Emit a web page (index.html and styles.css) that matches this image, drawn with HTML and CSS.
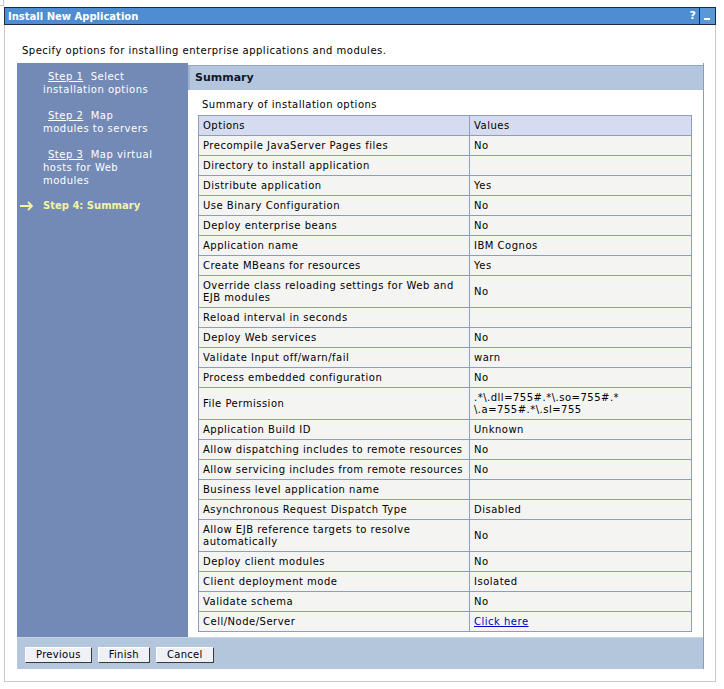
FILE: index.html
```html
<!DOCTYPE html>
<html>
<head>
<meta charset="utf-8">
<title>Install New Application</title>
<link rel="stylesheet" href="styles.css">
</head>
<body>
<div class="corner"></div>
<div class="page">
  <div class="titlebar">
    <span class="title">Install New Application</span>
    <span class="tb-icons">
      <span class="help">?</span>
      <span class="minimize"><span class="dash"></span></span>
    </span>
  </div>
  <div class="panel">
    <p class="intro">Specify options for installing enterprise applications and modules.</p>
    <div class="wizard">
      <nav class="steps">
        <div class="step"><span class="marker"></span><span class="step-text"><a class="step-link" href="#">Step 1</a>&nbsp; Select installation options</span></div>
        <div class="step"><span class="marker"></span><span class="step-text"><a class="step-link" href="#">Step 2</a>&nbsp; Map modules to servers</span></div>
        <div class="step"><span class="marker"></span><span class="step-text"><a class="step-link" href="#">Step 3</a>&nbsp; Map virtual hosts for Web modules</span></div>
        <div class="step current">
          <span class="marker"><svg class="arrow" width="15" height="10" viewBox="0 0 15 10"><path d="M1 5 H13 M9 1 L13 5 L9 9" fill="none" stroke="#f4f4a2" stroke-width="1.8"/></svg></span>
          <span class="step-text">Step 4: Summary</span>
        </div>
      </nav>
      <main class="content">
        <div class="content-head">Summary</div>
        <div class="content-body">
          <div class="caption">Summary of installation options</div>
          <table class="summary">
            <colgroup><col class="col-opt"><col class="col-val"></colgroup>
            <thead>
              <tr><th>Options</th><th>Values</th></tr>
            </thead>
            <tbody>
              <tr><td>Precompile JavaServer Pages files</td><td>No</td></tr>
              <tr><td>Directory to install application</td><td></td></tr>
              <tr><td>Distribute application</td><td>Yes</td></tr>
              <tr><td>Use Binary Configuration</td><td>No</td></tr>
              <tr><td>Deploy enterprise beans</td><td>No</td></tr>
              <tr><td>Application name</td><td>IBM Cognos</td></tr>
              <tr><td>Create MBeans for resources</td><td>Yes</td></tr>
              <tr><td>Override class reloading settings for Web and EJB modules</td><td>No</td></tr>
              <tr><td>Reload interval in seconds</td><td></td></tr>
              <tr><td>Deploy Web services</td><td>No</td></tr>
              <tr><td>Validate Input off/warn/fail</td><td>warn</td></tr>
              <tr><td>Process embedded configuration</td><td>No</td></tr>
              <tr><td>File Permission</td><td>.*\.dll=755#.*\.so=755#.*<br>\.a=755#.*\.sl=755</td></tr>
              <tr><td>Application Build ID</td><td>Unknown</td></tr>
              <tr><td>Allow dispatching includes to remote resources</td><td>No</td></tr>
              <tr><td>Allow servicing includes from remote resources</td><td>No</td></tr>
              <tr><td>Business level application name</td><td></td></tr>
              <tr><td>Asynchronous Request Dispatch Type</td><td>Disabled</td></tr>
              <tr><td>Allow EJB reference targets to resolve automatically</td><td>No</td></tr>
              <tr><td>Deploy client modules</td><td>No</td></tr>
              <tr><td>Client deployment mode</td><td>Isolated</td></tr>
              <tr><td>Validate schema</td><td>No</td></tr>
              <tr><td>Cell/Node/Server</td><td><a class="link" href="#">Click here</a></td></tr>
            </tbody>
          </table>
        </div>
      </main>
      <div class="buttons">
        <button class="btn" type="button">Previous</button>
        <button class="btn" type="button">Finish</button>
        <button class="btn" type="button">Cancel</button>
      </div>
    </div>
  </div>
</div>
</body>
</html>
```
FILE: styles.css
```css
* { box-sizing: border-box; }

html, body {
  margin: 0;
  padding: 0;
  background: #ffffff;
}

body {
  font-family: "DejaVu Sans", Verdana, sans-serif;
  font-size: 10px;
  letter-spacing: 0.5px;
  color: #000000;
  position: relative;
}

.corner {
  position: absolute;
  left: 0;
  top: 0;
  width: 4px;
  height: 6px;
  border-right: 1px solid #c8c8c8;
  border-bottom: 1px solid #c8c8c8;
}

.page {
  padding: 7px 0 0 4px;
  width: 716px;
}

.titlebar {
  height: 18px;
  background: #4e8dd1;
  border: 1px solid #1c2c48;
  display: flex;
  align-items: center;
  justify-content: space-between;
  padding-left: 3px;
  letter-spacing: 0;
}

.title {
  color: #ffffff;
  font-weight: bold;
  font-size: 10px;
}

.tb-icons {
  display: flex;
  align-items: stretch;
  height: 100%;
}

.help {
  color: #ffffff;
  font-weight: bold;
  font-size: 11px;
  line-height: 16px;
  padding-right: 3px;
  border-right: 1px solid #1c2c48;
}

.minimize {
  width: 15px;
  background: #5a97d6;
  position: relative;
}

.dash {
  position: absolute;
  left: 4px;
  bottom: 4px;
  width: 6px;
  height: 2px;
  background: #ffffff;
}

.panel {
  border: 1px solid #c9c9c9;
  border-top: none;
  padding: 0 11px 12px 12px;
}

.intro {
  margin: 0;
  padding: 20px 0 6px 5px;
  line-height: 12px;
}

.wizard {
  display: grid;
  grid-template-columns: 171px 1fr;
  grid-template-rows: auto 32px;
  border-right: 1px solid #8d9cb6;
}

.steps {
  background: #728ab5;
  padding: 7px 0 0 2px;
}

.step {
  display: grid;
  grid-template-columns: 24px 113px;
  line-height: 13px;
  margin-bottom: 13px;
  color: #ffffff;
}

.step.current {
  margin-top: -1px;
}

.marker {
  display: flex;
  align-items: center;
}

.arrow {
  display: block;
}

.step-text {
  text-indent: 5px;
}

.step-link {
  color: #ffffff;
  text-decoration: underline;
}

.step.current .step-text {
  color: #f4f4a2;
  font-weight: bold;
  text-indent: 0;
  letter-spacing: 0;
}

.content {
  padding-top: 2px;
  background: #ffffff;
}

.content-head {
  height: 25px;
  background: #b4c6de;
  border-left: 2px solid #9fb3d0;
  border-top: 1px solid #95a6c0;
  font-weight: bold;
  font-size: 11px;
  letter-spacing: 0;
  line-height: 24px;
  padding-left: 5px;
  color: #101828;
}

.content-body {
  padding: 9px 10px 5px 10px;
}

.caption {
  padding-left: 4px;
  line-height: 12px;
  margin-bottom: 4px;
}

.summary {
  width: 494px;
  table-layout: fixed;
  border-collapse: collapse;
  border: 1px solid #8d9dbc;
}

.summary th,
.summary td {
  border: 1px solid #8d9dbc;
  padding: 4px 3px 3px 4px;
  line-height: 12px;
  text-align: left;
  font-weight: normal;
  vertical-align: middle;
}

.summary th {
  background: #d5dcef;
}

.summary td {
  background: #f4f4f2;
}

.col-opt {
  width: 271px;
}

.link {
  color: #0000cc;
  text-decoration: underline;
}

.buttons {
  grid-column: 1 / 3;
  background: #b4c6dc;
  border-top: 1px solid #c9d4e4;
  padding: 9px 0 0 8px;
  display: flex;
  gap: 6px;
  align-items: flex-start;
}

.btn {
  font-family: "DejaVu Sans", Verdana, sans-serif;
  font-size: 10px;
  height: 16px;
  line-height: 12px;
  padding: 0 10px;
  background: #eff1f7;
  color: #000000;
  border: 1px solid;
  border-color: #ffffff #3a3a3a #3a3a3a #ffffff;
  letter-spacing: 0.3px;
}
```
